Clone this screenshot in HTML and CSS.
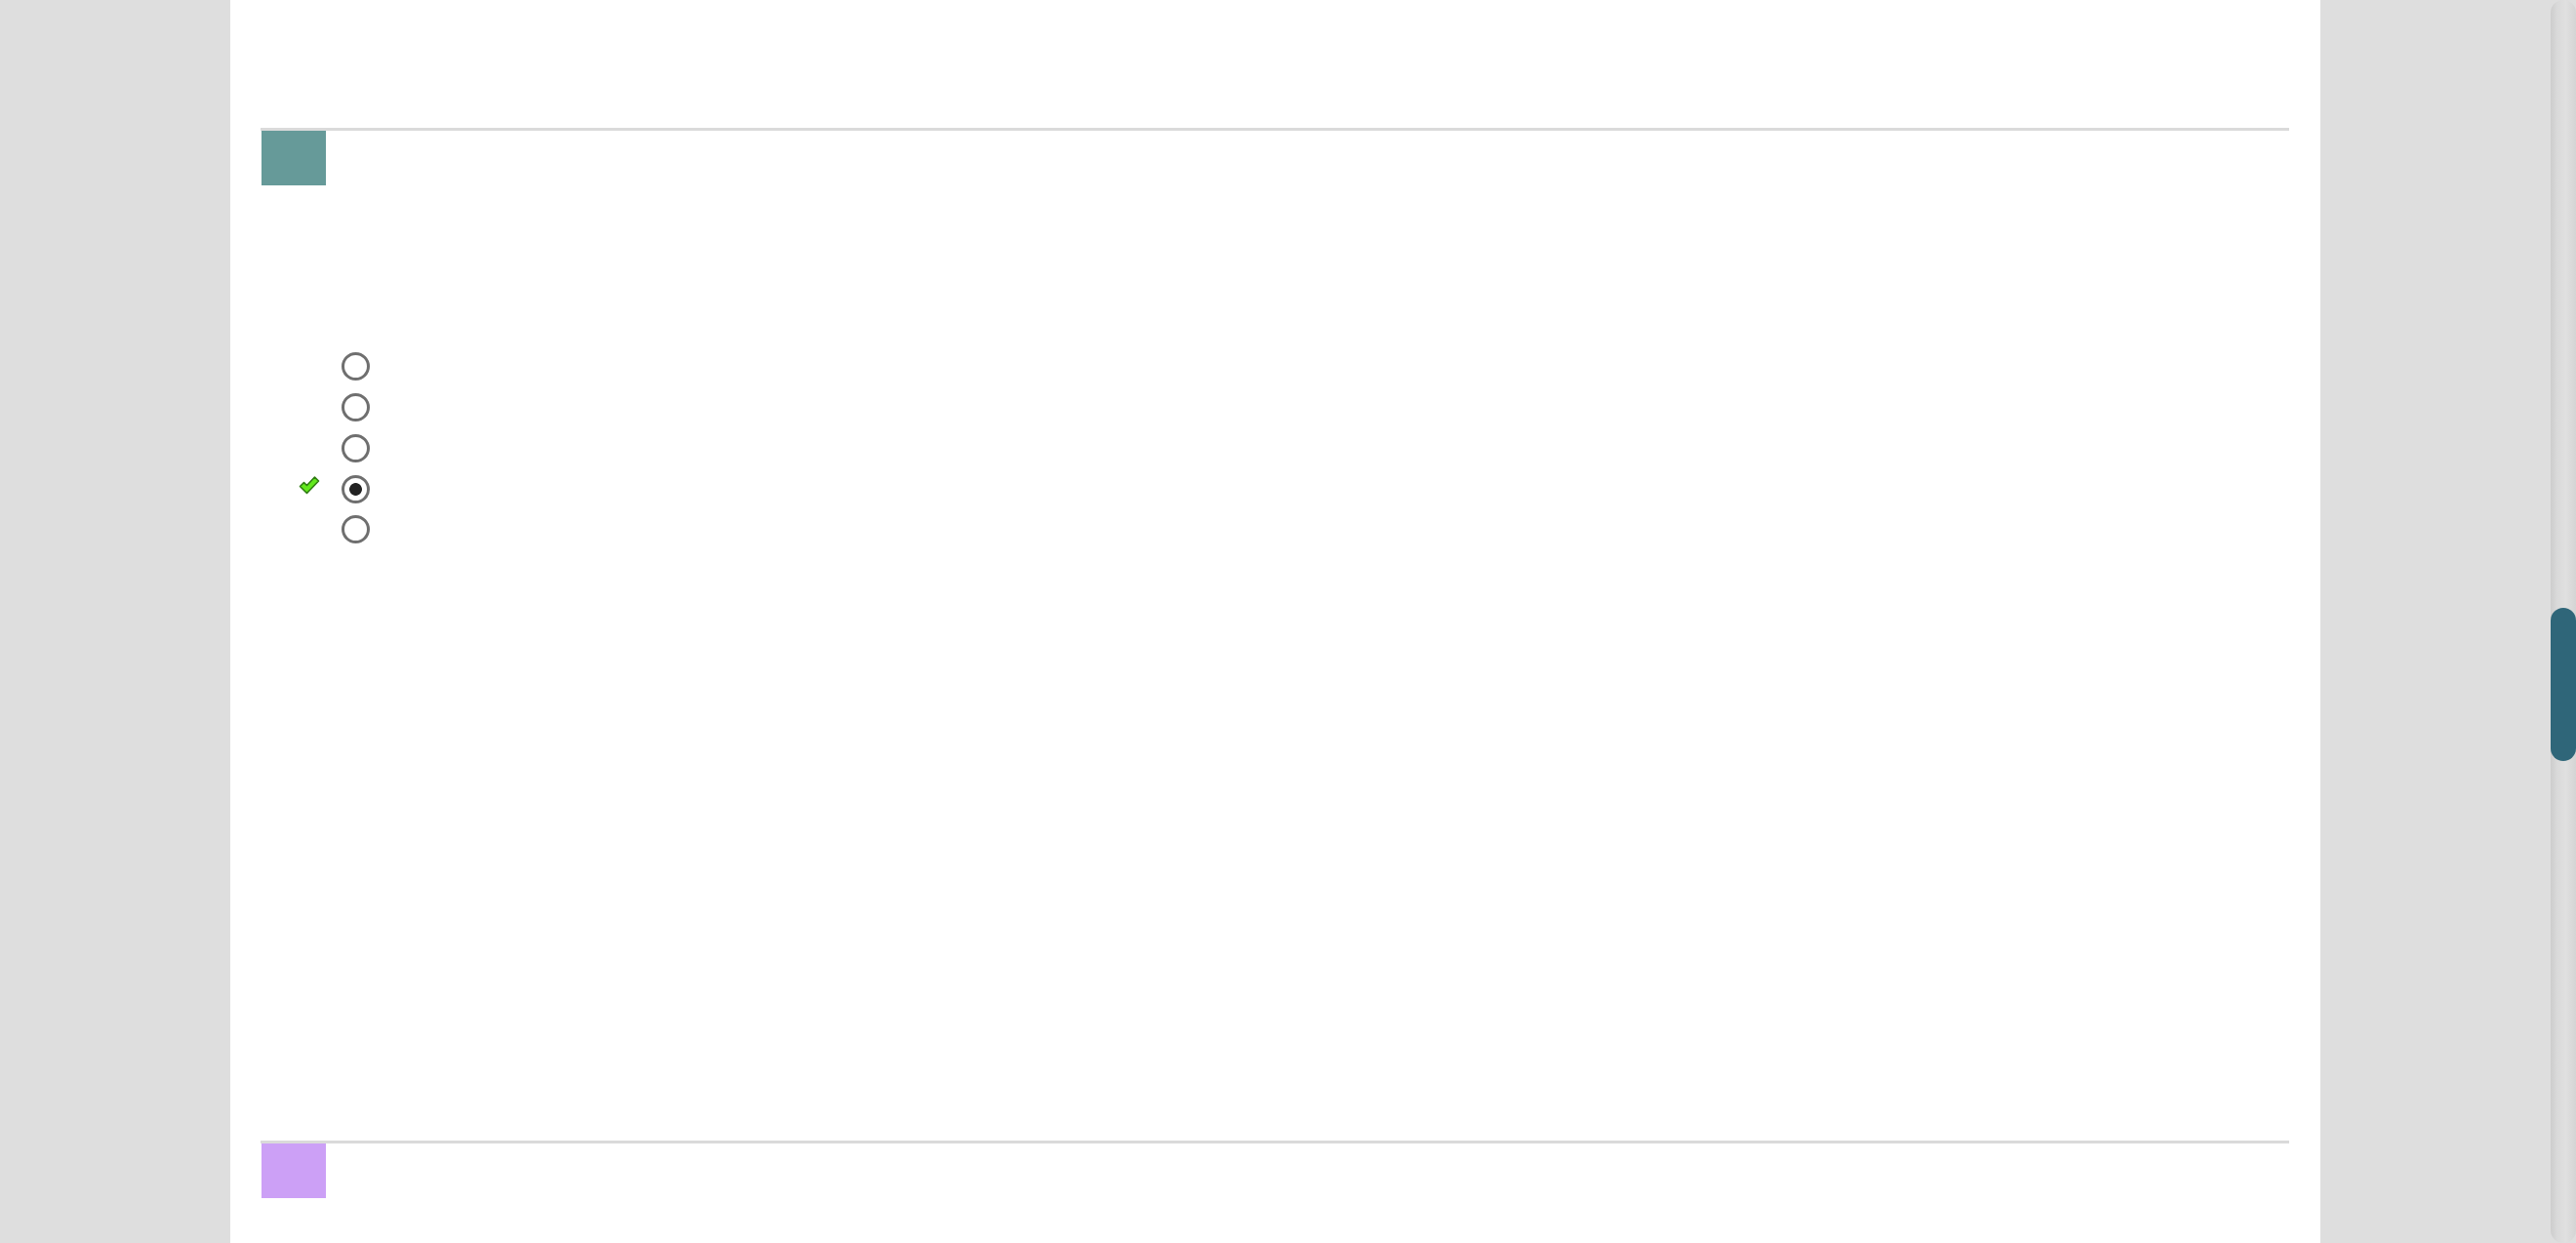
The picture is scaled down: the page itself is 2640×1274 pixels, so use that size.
FILE: index.html
```html
<!DOCTYPE html>
<html lang="en">
<head>
  <meta charset="UTF-8">
  <meta name="viewport" content="width=device-width, initial-scale=1">
  <title>Question</title>
  <link rel="stylesheet" href="styles.css">
</head>
<body>
  <div class="screen">
    <div class="viewport">
      <main class="page">
        <section class="block block-top">
          <div class="tag tag-teal"></div>
          <ul class="choices">
            <li class="choice"><span class="mark"></span><input type="radio" name="q1"></li>
            <li class="choice"><span class="mark"></span><input type="radio" name="q1"></li>
            <li class="choice"><span class="mark"></span><input type="radio" name="q1"></li>
            <li class="choice">
              <span class="mark">
                <svg width="22" height="21" viewBox="0 0 22 21">
                  <polygon points="1.5,11.5 5.5,7.5 8.5,10.5 16.5,2 20.5,6 8.5,18.5" fill="#62e81c" stroke="#2f7d12" stroke-width="1.6" stroke-linejoin="round"/>
                </svg>
              </span>
              <input type="radio" name="q1" checked>
            </li>
            <li class="choice"><span class="mark"></span><input type="radio" name="q1"></li>
          </ul>
        </section>
        <section class="block block-bottom">
          <div class="tag tag-purple"></div>
        </section>
      </main>
    </div>
    <div class="scrollbar">
      <div class="thumb"></div>
    </div>
  </div>
</body>
</html>
```

FILE: styles.css
```css
html, body {
  margin: 0;
  height: 100%;
  overflow: hidden;
}
body {
  font-family: "Liberation Sans", Arial, sans-serif;
  background-color: #dedede;
}
.screen {
  display: flex;
  height: 1274px;
}
.viewport {
  flex: 1;
  display: flex;
  justify-content: center;
}
.page {
  width: 2142px;
  box-sizing: border-box;
  padding: 131px 32px 0 31px;
  background: white;
}
.block {
  border-top: 3px solid #dadada;
}
.tag {
  width: 66px;
  height: 56px;
  margin-left: 1px;
}
.tag-teal {
  background-color: #669a99;
}
.tag-purple {
  background-color: #cca0f6;
}
.choices {
  list-style: none;
  margin: 165px 0 0 0;
  padding: 0 0 0 39px;
}
.choice {
  display: flex;
  align-items: center;
  height: 41.75px;
}
.mark {
  width: 44px;
  height: 28px;
  display: flex;
  align-items: flex-start;
  margin-top: -1px;
}
.choice input {
  appearance: none;
  -webkit-appearance: none;
  margin: 0;
  width: 29px;
  height: 29px;
  box-sizing: border-box;
  border: 3px solid #6f6f6f;
  border-radius: 50%;
  background: white;
}
.choice input:checked {
  background: radial-gradient(circle, #222 0, #222 6px, white 6.8px);
}
.block-bottom {
  margin-top: 605px;
}
.scrollbar {
  width: 26px;
  height: 1274px;
  border-radius: 13px;
  background: linear-gradient(to right, #cdcdcd, #d9d9d9 25%, #e0e0e0 60%, #d4d4d4);
}
.thumb {
  margin-top: 623px;
  height: 157px;
  border-radius: 13px;
  background-color: #2f6679;
}
```
